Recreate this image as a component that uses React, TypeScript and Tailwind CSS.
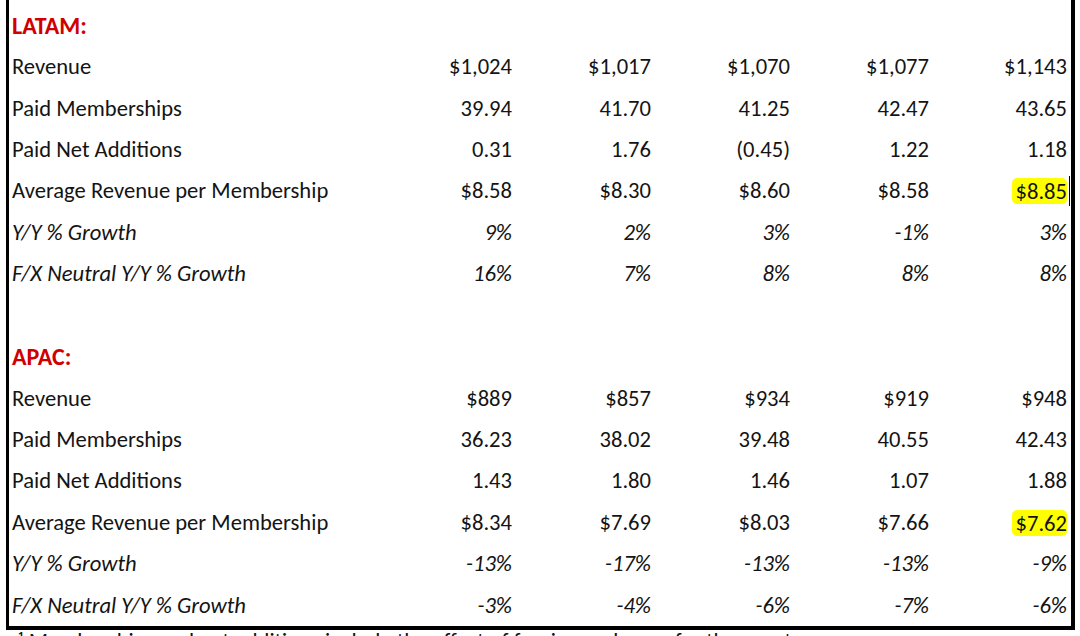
import * as React from "react";

type Row = {
  label: string;
  values: string[];
  italic?: boolean;
  highlightLast?: boolean;
  cursor?: boolean;
};

type Section = { title: string; rows: Row[] };

const sections: Section[] = [
  {
    title: "LATAM:",
    rows: [
      { label: "Revenue", values: ["$1,024", "$1,017", "$1,070", "$1,077", "$1,143"] },
      { label: "Paid Memberships", values: ["39.94", "41.70", "41.25", "42.47", "43.65"] },
      { label: "Paid Net Additions", values: ["0.31", "1.76", "(0.45)", "1.22", "1.18"] },
      {
        label: "Average Revenue per Membership",
        values: ["$8.58", "$8.30", "$8.60", "$8.58", "$8.85"],
        highlightLast: true,
        cursor: true,
      },
      { label: "Y/Y % Growth", values: ["9%", "2%", "3%", "-1%", "3%"], italic: true },
      { label: "F/X Neutral Y/Y % Growth", values: ["16%", "7%", "8%", "8%", "8%"], italic: true },
    ],
  },
  {
    title: "APAC:",
    rows: [
      { label: "Revenue", values: ["$889", "$857", "$934", "$919", "$948"] },
      { label: "Paid Memberships", values: ["36.23", "38.02", "39.48", "40.55", "42.43"] },
      { label: "Paid Net Additions", values: ["1.43", "1.80", "1.46", "1.07", "1.88"] },
      {
        label: "Average Revenue per Membership",
        values: ["$8.34", "$7.69", "$8.03", "$7.66", "$7.62"],
        highlightLast: true,
      },
      { label: "Y/Y % Growth", values: ["-13%", "-17%", "-13%", "-13%", "-9%"], italic: true },
      { label: "F/X Neutral Y/Y % Growth", values: ["-3%", "-4%", "-6%", "-7%", "-6%"], italic: true },
    ],
  },
];

const font = { fontFamily: "Carlito, Lato, 'Open Sans', sans-serif" };

function DataRow({ row }: { row: Row }) {
  return (
    <>
      <div className={`flex h-[41.43px] items-center pl-[3px] ${row.italic ? "italic" : ""}`}>
        {row.label}
      </div>
      {row.values.map((v, i) => {
        const last = i === row.values.length - 1;
        return (
          <div
            key={i}
            className={`flex h-[41.43px] items-center justify-end pr-[4px] ${row.italic ? "italic" : ""}`}
          >
            {last && row.highlightLast ? (
              <span className="relative rounded-[5px] bg-[#ffff00] pl-[3px] leading-[26px]">
                {v}
                {row.cursor && (
                  <span className="absolute right-[-3px] top-[-2px] h-[30px] w-px bg-black" />
                )}
              </span>
            ) : (
              v
            )}
          </div>
        );
      })}
    </>
  );
}

export default function App() {
  return (
    <div className="h-[636px] w-[1080px] overflow-hidden bg-white text-[22.6px] text-[#141414]" style={font}>
      <div className="ml-[6px] w-[1069px] border-b-4 border-l-[3px] border-r-4 border-black pt-[5px]">
        <div className="grid grid-cols-[368px_139px_139px_139px_139px_138px]">
          {sections.map((s, si) => (
            <React.Fragment key={s.title}>
              {si > 0 && <div className="col-span-6 h-[41.43px]" />}
              <div className="col-span-6 flex h-[41.43px] items-center pl-[3px] text-[24px] font-bold text-[#d00000]">
                {s.title}
              </div>
              {s.rows.map((r) => (
                <DataRow key={s.title + r.label} row={r} />
              ))}
            </React.Fragment>
          ))}
        </div>
      </div>
      <div className="mt-0 whitespace-nowrap pl-[18px] leading-[22px]">
        ¹ Memberships and net additions include the effect of foreign exchange for the quarter
      </div>
    </div>
  );
}
